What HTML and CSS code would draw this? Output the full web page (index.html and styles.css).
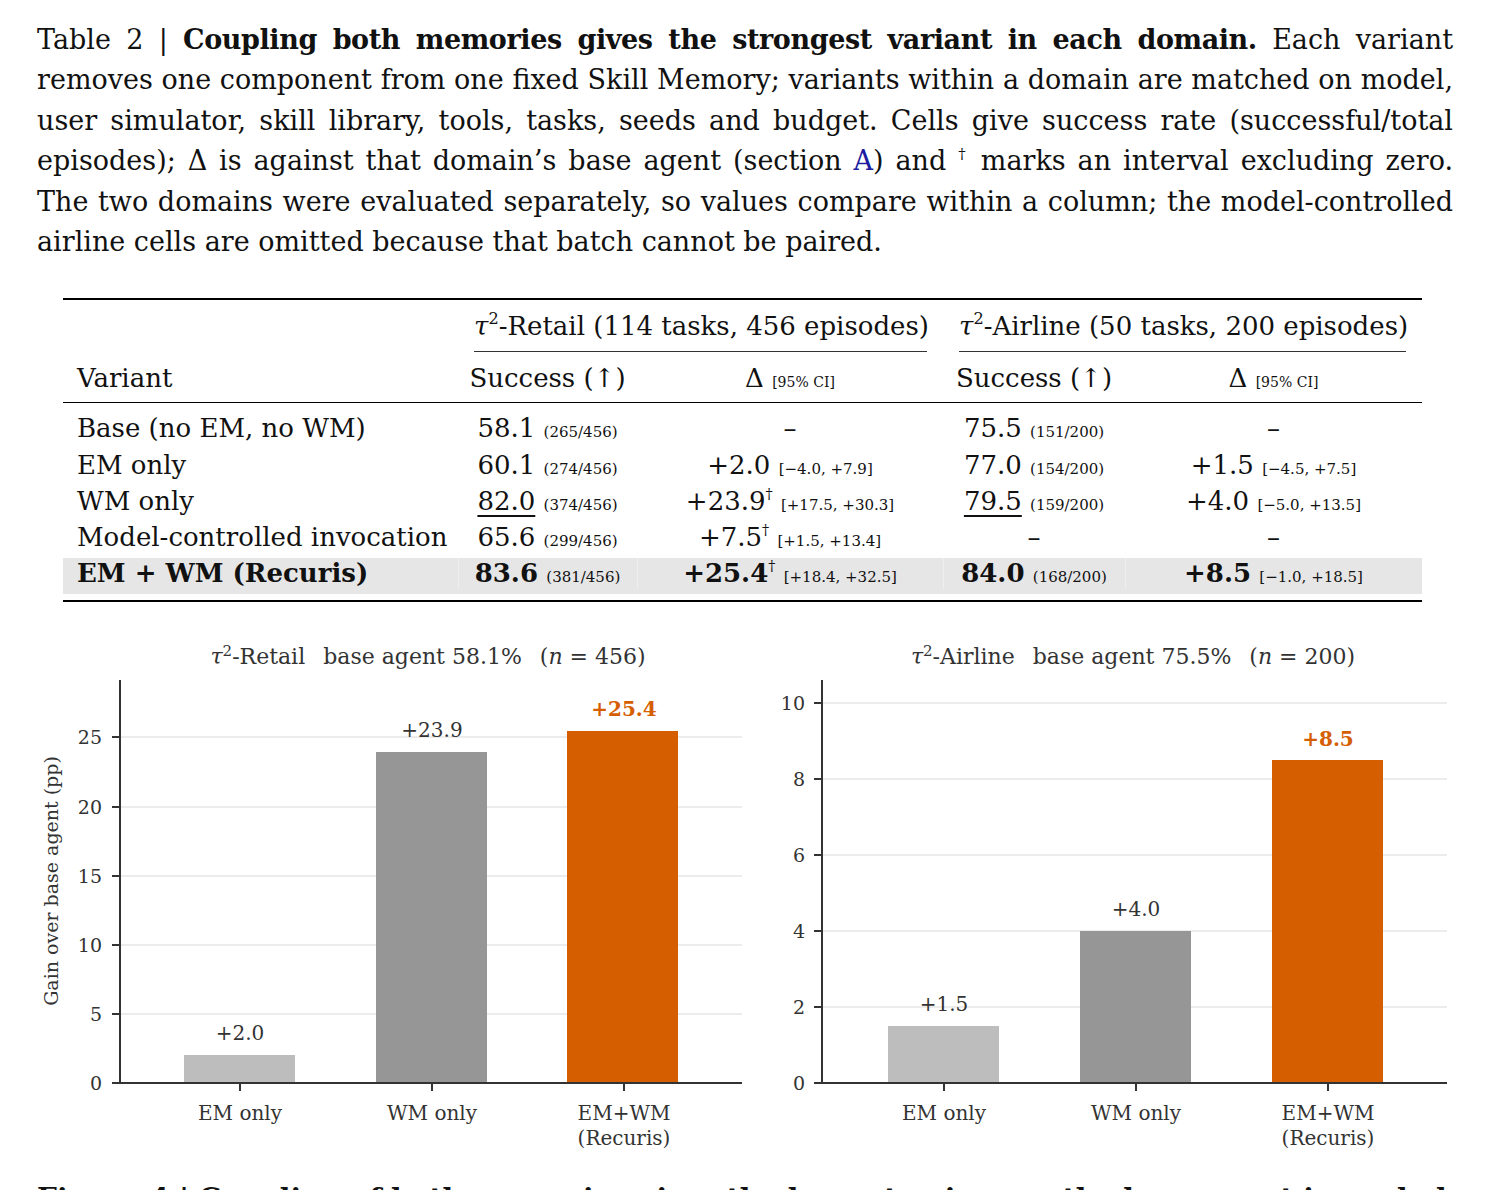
FILE: index.html
```html
<!DOCTYPE html>
<html>

<head>
	<link rel="stylesheet" href="styles.css">
</head>

<body>
	<div class="page">
		<div class="caption">
			<div class="line">Table 2 | <b>Coupling both memories gives the strongest variant in each domain.</b> Each variant</div>
			<div class="line">removes one component from one fixed Skill Memory; variants within a domain are matched on model,</div>
			<div class="line">user simulator, skill library, tools, tasks, seeds and budget. Cells give success rate (successful/total</div>
			<div class="line">episodes); Δ is against that domain’s base agent (section <a class="ref">A</a>) and <sup class="dag">†</sup> marks an interval excluding zero.</div>
			<div class="line">The two domains were evaluated separately, so values compare within a column; the model-controlled</div>
			<div class="line last">airline cells are omitted because that batch cannot be paired.</div>
		</div>

		<div class="results">
			<div class="row group-row">
				<div class="cell"></div>
				<div class="cell group"><div class="group-label"><i>τ</i><sup class="sq">2</sup>-Retail (114 tasks, 456 episodes)</div></div>
				<div class="cell group"><div class="group-label"><i>τ</i><sup class="sq">2</sup>-Airline (50 tasks, 200 episodes)</div></div>
			</div>
			<div class="row head-row">
				<div class="cell name">Variant</div>
				<div class="cell">Success (↑)</div>
				<div class="cell">Δ <small>[95% CI]</small></div>
				<div class="cell">Success (↑)</div>
				<div class="cell">Δ <small>[95% CI]</small></div>
			</div>
			<div class="body">
				<div class="row">
					<div class="cell name">Base (no EM, no WM)</div>
					<div class="cell">58.1 <small>(265/456)</small></div>
					<div class="cell">–</div>
					<div class="cell">75.5 <small>(151/200)</small></div>
					<div class="cell">–</div>
				</div>
				<div class="row">
					<div class="cell name">EM only</div>
					<div class="cell">60.1 <small>(274/456)</small></div>
					<div class="cell">+2.0 <small>[−4.0, +7.9]</small></div>
					<div class="cell">77.0 <small>(154/200)</small></div>
					<div class="cell">+1.5 <small>[−4.5, +7.5]</small></div>
				</div>
				<div class="row">
					<div class="cell name">WM only</div>
					<div class="cell"><u>82.0</u> <small>(374/456)</small></div>
					<div class="cell">+23.9<sup class="dag">†</sup> <small>[+17.5, +30.3]</small></div>
					<div class="cell"><u>79.5</u> <small>(159/200)</small></div>
					<div class="cell">+4.0 <small>[−5.0, +13.5]</small></div>
				</div>
				<div class="row">
					<div class="cell name">Model-controlled invocation</div>
					<div class="cell">65.6 <small>(299/456)</small></div>
					<div class="cell">+7.5<sup class="dag">†</sup> <small>[+1.5, +13.4]</small></div>
					<div class="cell">–</div>
					<div class="cell">–</div>
				</div>
				<div class="row hl">
					<div class="cell name"><b>EM + WM (Recuris)</b></div>
					<div class="cell"><b>83.6</b> <small>(381/456)</small></div>
					<div class="cell"><b>+25.4</b><sup class="dag">†</sup> <small>[+18.4, +32.5]</small></div>
					<div class="cell"><b>84.0</b> <small>(168/200)</small></div>
					<div class="cell"><b>+8.5</b> <small>[−1.0, +18.5]</small></div>
				</div>
			</div>
		</div>

		<div class="charts">
			<!-- Retail -->
			<svg class="chart" width="740" height="540" viewBox="20 620 740 540">
				<text class="ctitle" x="428" y="664" text-anchor="middle"><tspan font-style="italic">τ</tspan><tspan dy="-8" font-size="15">2</tspan><tspan dy="8">-Retail</tspan><tspan dx="18">base agent 58.1%</tspan><tspan dx="18">(</tspan><tspan font-style="italic">n</tspan><tspan> = 456)</tspan></text>

				<line class="grid" x1="121" y1="1014" x2="742" y2="1014" />
				<line class="grid" x1="121" y1="945" x2="742" y2="945" />
				<line class="grid" x1="121" y1="876" x2="742" y2="876" />
				<line class="grid" x1="121" y1="807" x2="742" y2="807" />
				<line class="grid" x1="121" y1="737" x2="742" y2="737" />

				<rect x="184" y="1055" width="111" height="28" fill="#bdbdbd" />
				<rect x="376" y="752" width="111" height="331" fill="#969696" />
				<rect x="567" y="731" width="111" height="352" fill="#d55e00" />

				<text class="blabel" x="240" y="1040">+2.0</text>
				<text class="blabel" x="432" y="737">+23.9</text>
				<text class="blabel best" x="624" y="716">+25.4</text>

				<line class="axis" x1="120" y1="680" x2="120" y2="1084" />
				<line class="axis" x1="112" y1="1083" x2="742" y2="1083" />
				<line class="axis" x1="112" y1="1014" x2="120" y2="1014" />
				<line class="axis" x1="112" y1="945" x2="120" y2="945" />
				<line class="axis" x1="112" y1="876" x2="120" y2="876" />
				<line class="axis" x1="112" y1="807" x2="120" y2="807" />
				<line class="axis" x1="112" y1="737" x2="120" y2="737" />
				<line class="axis" x1="240" y1="1083" x2="240" y2="1091" />
				<line class="axis" x1="432" y1="1083" x2="432" y2="1091" />
				<line class="axis" x1="624" y1="1083" x2="624" y2="1091" />

				<text class="tick" x="102" y="1090">0</text>
				<text class="tick" x="102" y="1021">5</text>
				<text class="tick" x="102" y="952">10</text>
				<text class="tick" x="102" y="883">15</text>
				<text class="tick" x="102" y="814">20</text>
				<text class="tick" x="102" y="744">25</text>

				<text class="xlabel" x="240" y="1120">EM only</text>
				<text class="xlabel" x="432" y="1120">WM only</text>
				<text class="xlabel" x="624" y="1120">EM+WM</text>
				<text class="xlabel" x="624" y="1145">(Recuris)</text>

				<text class="ylabel" transform="translate(58 881) rotate(-90)">Gain over base agent (pp)</text>
			</svg>

			<!-- Airline -->
			<svg class="chart" width="706" height="540" viewBox="760 620 706 540">
				<text class="ctitle" x="1133" y="664" text-anchor="middle"><tspan font-style="italic">τ</tspan><tspan dy="-8" font-size="15">2</tspan><tspan dy="8">-Airline</tspan><tspan dx="18">base agent 75.5%</tspan><tspan dx="18">(</tspan><tspan font-style="italic">n</tspan><tspan> = 200)</tspan></text>

				<line class="grid" x1="823" y1="1007" x2="1447" y2="1007" />
				<line class="grid" x1="823" y1="931" x2="1447" y2="931" />
				<line class="grid" x1="823" y1="855" x2="1447" y2="855" />
				<line class="grid" x1="823" y1="779" x2="1447" y2="779" />
				<line class="grid" x1="823" y1="703" x2="1447" y2="703" />

				<rect x="888" y="1026" width="111" height="57" fill="#bdbdbd" />
				<rect x="1080" y="931" width="111" height="152" fill="#969696" />
				<rect x="1272" y="760" width="111" height="323" fill="#d55e00" />

				<text class="blabel" x="944" y="1011">+1.5</text>
				<text class="blabel" x="1136" y="916">+4.0</text>
				<text class="blabel best" x="1328" y="746">+8.5</text>

				<line class="axis" x1="822" y1="680" x2="822" y2="1084" />
				<line class="axis" x1="814" y1="1083" x2="1447" y2="1083" />
				<line class="axis" x1="814" y1="1007" x2="822" y2="1007" />
				<line class="axis" x1="814" y1="931" x2="822" y2="931" />
				<line class="axis" x1="814" y1="855" x2="822" y2="855" />
				<line class="axis" x1="814" y1="779" x2="822" y2="779" />
				<line class="axis" x1="814" y1="703" x2="822" y2="703" />
				<line class="axis" x1="944" y1="1083" x2="944" y2="1091" />
				<line class="axis" x1="1136" y1="1083" x2="1136" y2="1091" />
				<line class="axis" x1="1328" y1="1083" x2="1328" y2="1091" />

				<text class="tick" x="805" y="1090">0</text>
				<text class="tick" x="805" y="1014">2</text>
				<text class="tick" x="805" y="938">4</text>
				<text class="tick" x="805" y="862">6</text>
				<text class="tick" x="805" y="786">8</text>
				<text class="tick" x="805" y="710">10</text>

				<text class="xlabel" x="944" y="1120">EM only</text>
				<text class="xlabel" x="1136" y="1120">WM only</text>
				<text class="xlabel" x="1328" y="1120">EM+WM</text>
				<text class="xlabel" x="1328" y="1145">(Recuris)</text>
			</svg>
		</div>

		<div class="figcap"><b>Figure 4 | Coupling of both memories gives the largest gain over the base agent in each domain.</b></div>
	</div>
</body>

</html>
```

FILE: styles.css
```css
* {
	box-sizing: border-box;
}

body {
	margin: 0;
	background: #fff;
	color: #111;
	font-family: 'DejaVu Serif', 'Liberation Serif', serif;
}

.page {
	width: 1486px;
	overflow: hidden;
}

/* Table caption */
.caption {
	padding: 20px 33px 0 37px;
	font-size: 27px;
	line-height: 40.4px;
}

.caption .line {
	text-align: justify;
	text-align-last: justify;
}

.caption .line.last {
	text-align-last: left;
}

.caption b {
	letter-spacing: -0.4px;
}

.ref {
	color: #1c1ca0;
}

.dag {
	font-size: 0.55em;
	line-height: 0;
	vertical-align: 0.75em;
}

.sq {
	font-size: 0.62em;
	line-height: 0;
	vertical-align: 0.7em;
}

/* Results table */
.results {
	margin: 35.6px 0 0 63px;
	width: 1359px;
	border-top: 2px solid #000;
	border-bottom: 2px solid #000;
	font-size: 26px;
}

.row {
	display: grid;
	grid-template-columns: 395px 179px 306px 182px 297px;
}

.cell {
	text-align: center;
	white-space: nowrap;
}

.cell.name {
	text-align: left;
	padding-left: 14px;
}

.cell small {
	font-size: 15px;
	line-height: 1;
}

.cell u {
	text-decoration-thickness: 1.5px;
	text-underline-offset: 5px;
}

.group-row {
	grid-template-columns: 395px 485px 479px;
	line-height: 40px;
}

.group {
	padding: 0 16px;
}

.group-label {
	padding: 6px 0 5px;
	border-bottom: 1px solid #333;
}

.head-row {
	line-height: 40px;
	padding: 6px 0 4px;
	border-bottom: 1.5px solid #000;
}

.head-row small {
	font-size: 14px;
}

.body {
	padding: 7.4px 0 6px;
	line-height: 36.3px;
}

.row.hl {
	margin-top: 1.9px;
	background: #e6e6e6;
	line-height: 30.3px;
	padding: 0.9px 0 5.8px;
}

.row.hl .cell + .cell {
	box-shadow: inset 1px 0 #eeeeee;
}

/* Charts */
.charts {
	display: flex;
	padding-left: 20px;
	margin-top: 18px;
}

.chart {
	display: block;
}

.ctitle {
	font-family: 'DejaVu Serif', serif;
	font-size: 22px;
	fill: #333;
}

.grid {
	stroke: #e6e6e6;
	stroke-width: 1.5;
}

.axis {
	stroke: #333;
	stroke-width: 2;
}

.tick {
	font-family: 'DejaVu Serif', serif;
	font-size: 19px;
	fill: #333;
	text-anchor: end;
}

.blabel {
	font-family: 'DejaVu Serif', serif;
	font-size: 20px;
	fill: #333;
	text-anchor: middle;
}

.blabel.best {
	fill: #d55e00;
	font-weight: bold;
}

.xlabel {
	font-family: 'DejaVu Serif', serif;
	font-size: 20px;
	fill: #333;
	text-anchor: middle;
}

.ylabel {
	font-family: 'DejaVu Serif', serif;
	font-size: 19px;
	fill: #333;
	text-anchor: middle;
}

.figcap {
	margin-top: 19px;
	padding: 0 37px;
	font-size: 28px;
	line-height: 40px;
	white-space: nowrap;
}
```
